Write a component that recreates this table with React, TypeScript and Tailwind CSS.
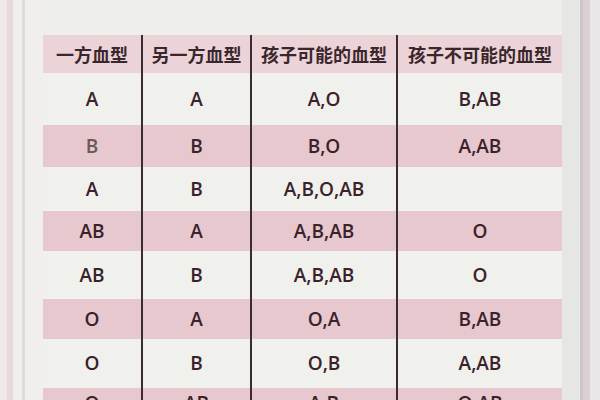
const header = ["一方血型", "另一方血型", "孩子可能的血型", "孩子不可能的血型"];

const rows = [
  { cells: ["A", "A", "A,O", "B,AB"], pink: false, h: "h-[52px]" },
  { cells: ["B", "B", "B,O", "A,AB"], pink: true, h: "h-[42px]" },
  { cells: ["A", "B", "A,B,O,AB", ""], pink: false, h: "h-[44px]" },
  { cells: ["AB", "A", "A,B,AB", "O"], pink: true, h: "h-[40px]" },
  { cells: ["AB", "B", "A,B,AB", "O"], pink: false, h: "h-[48px]" },
  { cells: ["O", "A", "O,A", "B,AB"], pink: true, h: "h-[40px]" },
  { cells: ["O", "B", "O,B", "A,AB"], pink: false, h: "h-[49px]" },
  { cells: ["O", "AB", "A,B", "O,AB"], pink: true, h: "h-[30px]" },
];

const line = "border-l-[2px] border-[#3a2c30]";

export default function App() {
  return (
    <div className="flex h-[400px] w-[600px] overflow-hidden bg-[#eeefeb]">
      {/* wall / frame edge on the left */}
      <div className="w-[7px] bg-[#f1e9e9]" />
      <div className="w-[6px] bg-[#e8dadb]" />
      <div className="w-[9px] bg-[#f3eeee]" />
      <div className="w-[3px] bg-[#e2d9da]" />
      <div className="w-[18px] bg-[#f0efec]" />

      <div className="w-[519px] pt-[35px] font-['Open_Sans','Noto_Sans_CJK_SC',sans-serif]">
        <div className="grid grid-cols-[98px_109px_146px_166px]">
          {header.map((t, i) => (
            <div
              key={t}
              className={`flex h-[38px] items-center justify-center bg-[#ebd3d7] text-[18px] font-bold text-[#3a272d] font-['Noto_Sans_CJK_SC',sans-serif] ${i > 0 ? line : ""}`}
            >
              {t}
            </div>
          ))}
          {rows.map((r, ri) =>
            r.cells.map((c, ci) => (
              <div
                key={`${ri}-${ci}`}
                className={`flex ${r.h} items-center justify-center text-[19px] font-semibold ${r.pink ? "bg-[#e7c8ce]" : "bg-[#f0f0ec]"} ${ri === 1 && ci === 0 ? "text-[#6a5a60]" : "text-[#3a222b]"} ${ci > 0 ? line : ""}`}
              >
                {c}
              </div>
            ))
          )}
        </div>
      </div>

      {/* frame edge on the right */}
      <div className="w-[18px] bg-[#e6e7e4]" />
      <div className="w-[3px] bg-[#cdc6c8]" />
      <div className="w-[7px] bg-[#dccfd2]" />
      <div className="flex-1 bg-[#e9e7e7]" />
    </div>
  );
}
